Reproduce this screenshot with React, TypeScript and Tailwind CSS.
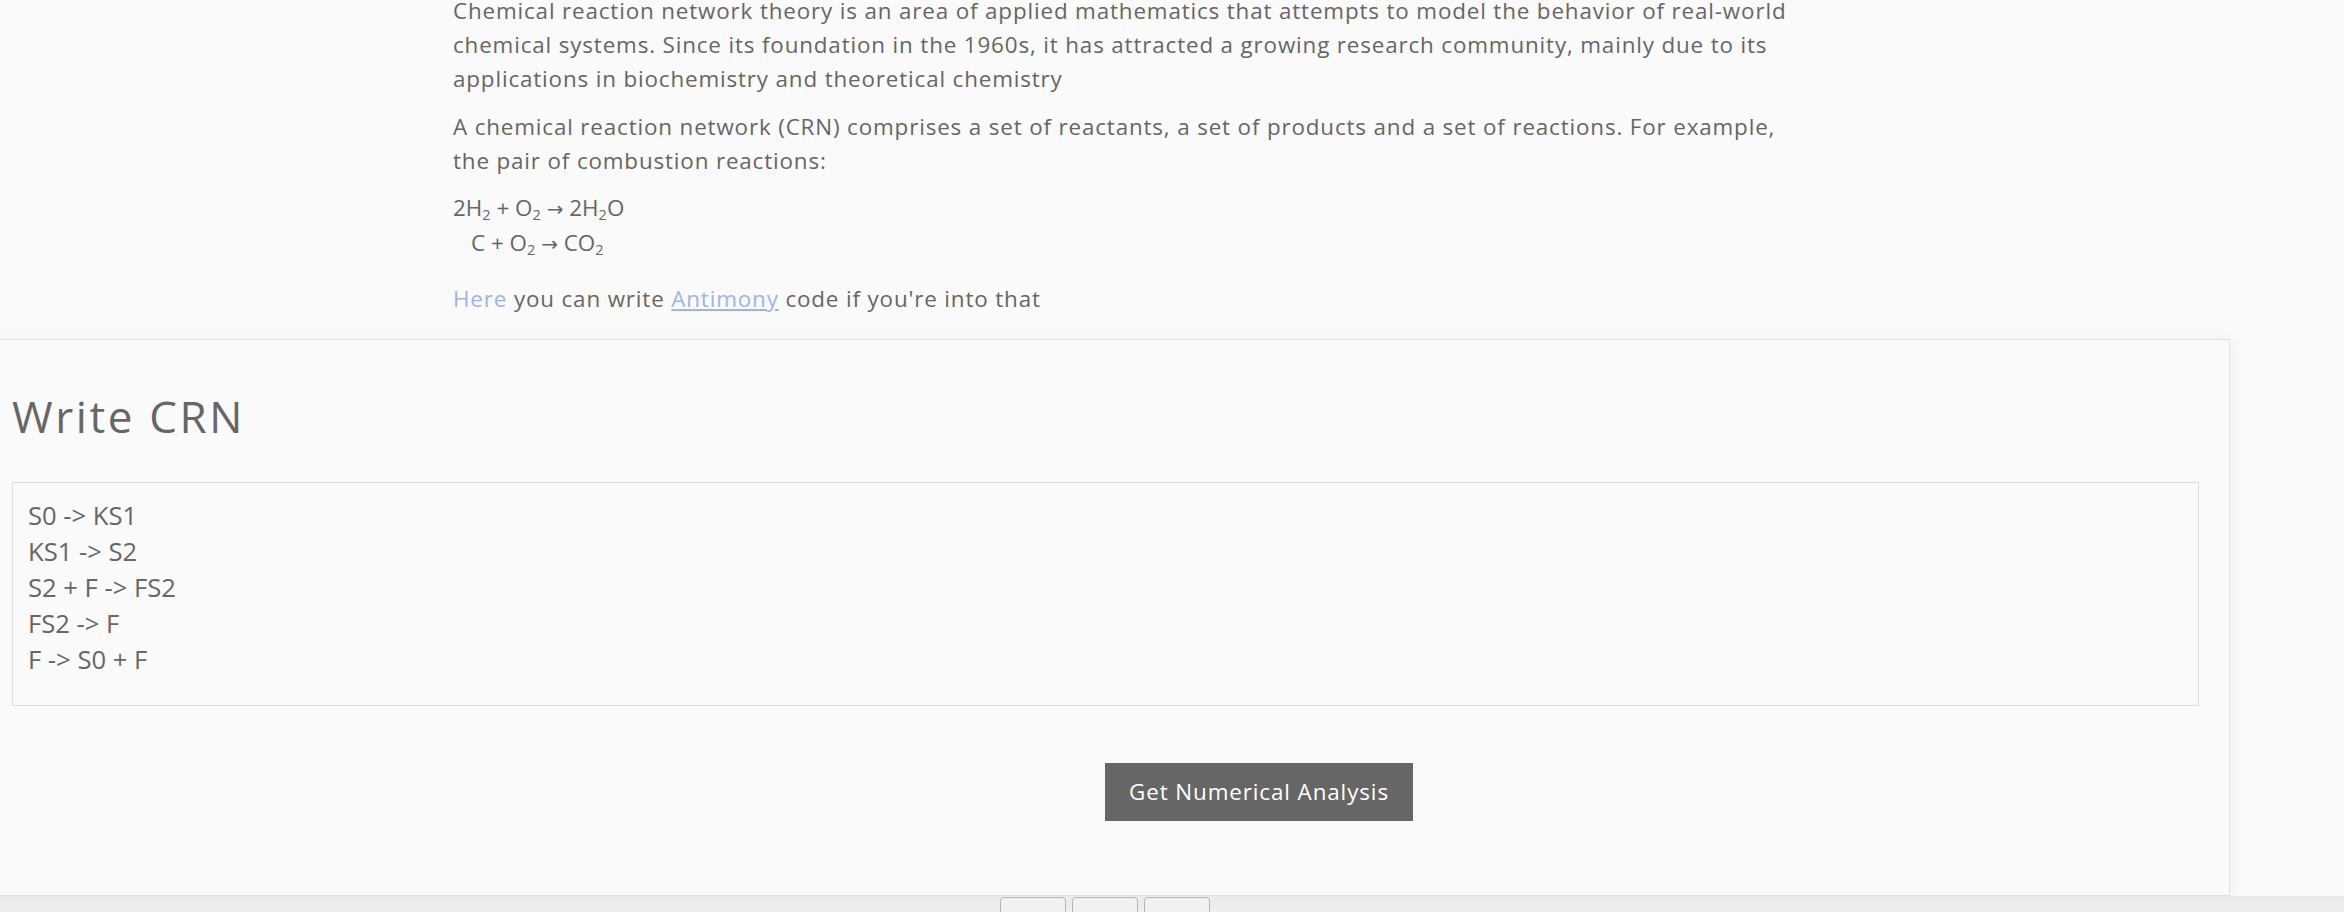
import React from "react";

const font = { fontFamily: '"Open Sans", "Liberation Sans", sans-serif' };

const reactions = ["S0 -> KS1", "KS1 -> S2", "S2 + F -> FS2", "FS2 -> F", "F -> S0 + F"];

const Arrow = () => <span className="font-['DejaVu_Sans'] text-[20px]">→</span>;

const Intro = () => (
  <div className="ml-[453px] mt-[-6px] w-[1350px] text-[22.4px] leading-[34px] tracking-[0.85px] text-[#666]">
    <p>
      Chemical reaction network theory is an area of applied mathematics that attempts to model the
      behavior of real-world chemical systems. Since its foundation in the 1960s, it has attracted a
      growing research community, mainly due to its applications in biochemistry and theoretical chemistry
    </p>
    <p className="mt-[14px]">
      A chemical reaction network (CRN) comprises a set of reactants, a set of products and a set of
      reactions. For example, the pair of combustion reactions:
    </p>
    <div className="mt-[13px] tracking-normal">
      <div>
        2H<sub className="text-[65%]">2</sub> + O<sub className="text-[65%]">2</sub> <Arrow /> 2H
        <sub className="text-[65%]">2</sub>O
      </div>
      <div className="pl-[18px]">
        C + O<sub className="text-[65%]">2</sub> <Arrow /> CO<sub className="text-[65%]">2</sub>
      </div>
    </div>
    <p className="mt-[21px]">
      <a className="text-[#9db5e6]">Here</a> you can write{" "}
      <a className="text-[#9db5e6] underline">Antimony</a> code if you're into that
    </p>
  </div>
);

const WriteCard = () => (
  <div className="mt-[23px] ml-[-24px] w-[2254px] h-[557px] border border-[#e2e2e2] bg-[#fafafa] pl-[35px] pr-[30px] shadow-[0_2px_14px_rgba(0,0,0,0.06)]">
    <h2 className="mt-[50px] text-[44px] leading-[53px] font-normal tracking-[2.6px] text-[#666]">Write CRN</h2>
    <div className="mt-[39px] h-[224px] border border-[#dcdcdc] px-[15px] py-[15px] text-[25.6px] leading-[36px] text-[#666]">
      {reactions.map((r) => (
        <div key={r}>{r}</div>
      ))}
    </div>
    <button className="mt-[57px] ml-[1093px] h-[58px] w-[308px] bg-[#666] text-[22.4px] tracking-[0.9px] text-white">
      Get Numerical Analysis
    </button>
  </div>
);

const App = () => {
  return (
    <div className="h-[912px] w-[2344px] overflow-hidden bg-[#fafafa]" style={font}>
      <Intro />
      <WriteCard />
      <div className="flex h-[40px] gap-[6px] bg-gradient-to-b from-[#ebebeb] to-[#f4f4f4] pl-[1000px] pt-[1px]">
        {[0, 1, 2].map((i) => (
          <div key={i} className="h-[30px] w-[66px] rounded-t-[4px] border border-[#b4b4b4] bg-[#f1f1f1]" />
        ))}
      </div>
    </div>
  );
};

export default App;
